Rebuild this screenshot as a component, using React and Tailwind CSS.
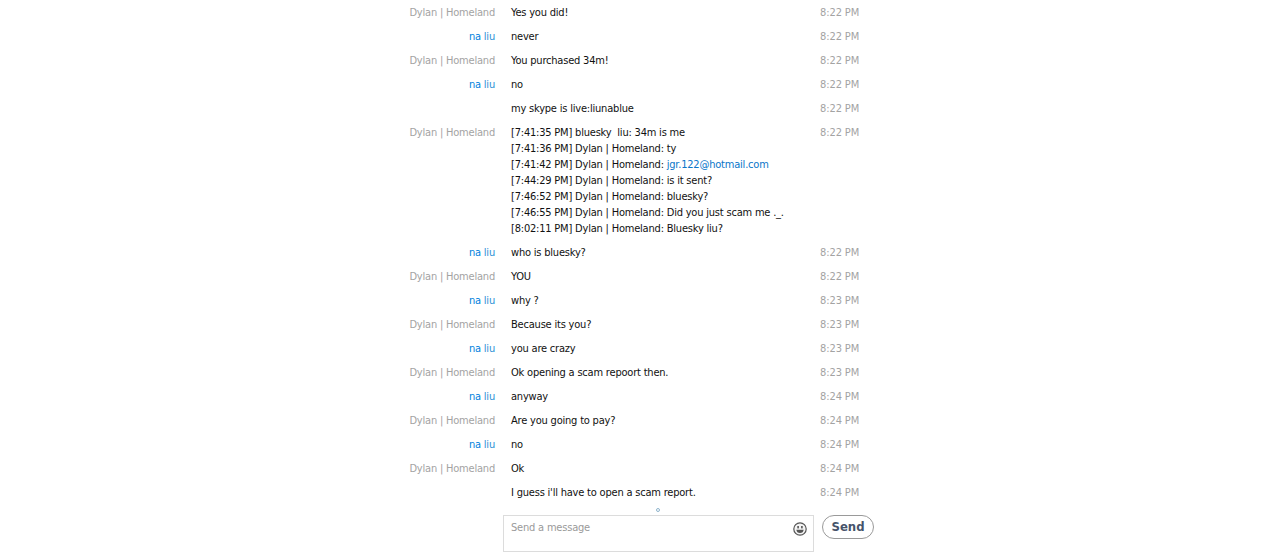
import { Fragment } from "react";

const DYLAN = "Dylan | Homeland";

const rows = [
  { who: DYLAN, text: "Yes you did!", time: "8:22 PM" },
  { who: "na liu", text: "never", time: "8:22 PM" },
  { who: DYLAN, text: "You purchased 34m!", time: "8:22 PM" },
  { who: "na liu", text: "no", time: "8:22 PM" },
  { who: "", text: "my skype is live:liunablue", time: "8:22 PM" },
  {
    who: DYLAN,
    lines: [
      "[7:41:35 PM] bluesky\u00a0 liu: 34m is me",
      "[7:41:36 PM] Dylan | Homeland: ty",
      <Fragment key="mail">
        [7:41:42 PM] Dylan | Homeland: <span className="text-[#0a76c9]">jgr.122@hotmail.com</span>
      </Fragment>,
      "[7:44:29 PM] Dylan | Homeland: is it sent?",
      "[7:46:52 PM] Dylan | Homeland: bluesky?",
      "[7:46:55 PM] Dylan | Homeland: Did you just scam me ._.",
      "[8:02:11 PM] Dylan | Homeland: Bluesky liu?",
    ],
    time: "8:22 PM",
  },
  { who: "na liu", text: "who is bluesky?", time: "8:22 PM" },
  { who: DYLAN, text: "YOU", time: "8:22 PM" },
  { who: "na liu", text: "why ?", time: "8:23 PM" },
  { who: DYLAN, text: "Because its you?", time: "8:23 PM" },
  { who: "na liu", text: "you are crazy", time: "8:23 PM" },
  { who: DYLAN, text: "Ok opening a scam repoort then.", time: "8:23 PM" },
  { who: "na liu", text: "anyway", time: "8:24 PM" },
  { who: DYLAN, text: "Are you going to pay?", time: "8:24 PM" },
  { who: "na liu", text: "no", time: "8:24 PM" },
  { who: DYLAN, text: "Ok", time: "8:24 PM" },
  { who: "", text: "I guess i'll have to open a scam report.", time: "8:24 PM" },
];

function Who({ name }) {
  if (name === "na liu") {
    return (
      <span>
        <span className="text-[#007fdd]">na</span> <span className="text-[#2b8fd6]">liu</span>
      </span>
    );
  }
  return <span className="text-[#a3a3a3]">{name}</span>;
}

function Smiley() {
  return (
    <svg viewBox="0 0 14 14" className="h-[14px] w-[14px]">
      <circle cx="7" cy="7" r="6.2" fill="#f4f4f4" stroke="#555" strokeWidth="1.2" />
      <rect x="4.3" y="4" width="1.6" height="2.4" fill="#555" />
      <rect x="8.1" y="4" width="1.6" height="2.4" fill="#555" />
      <path d="M3.4 7.8h7.2c0 2-1.5 3.3-3.6 3.3S3.4 9.8 3.4 7.8z" fill="#555" />
    </svg>
  );
}

export default function App() {
  return (
    <div className="h-[560px] overflow-hidden bg-white font-['DejaVu_Sans_Condensed','DejaVu_Sans',sans-serif] text-[11px] leading-4 tracking-[-0.2px] whitespace-nowrap text-[#111]">
      <div className="ml-[400px] w-[480px]">
        {rows.map((r, i) => (
          <div key={i} className="flex pt-[5px] pb-[3px]">
            <div className="w-[95px] text-right">
              <Who name={r.who} />
            </div>
            <div className="ml-4 w-[309px]">
              {r.lines ? r.lines.map((l, j) => <div key={j}>{l}</div>) : r.text}
            </div>
            <div className="tracking-[-0.1px] text-[#a3a3a3]">{r.time}</div>
          </div>
        ))}

        <div className="mt-1 ml-[256px] h-[4px] w-[4px] rounded-full border border-[#8fb4cc]" />

        <div className="mt-[3px] ml-[103px] flex items-start">
          <div className="flex h-[37px] w-[311px] justify-between border border-[#dcdcdc] pt-1 pr-[6px] pl-[7px] text-[#9a9a9a]">
            <span>Send a message</span>
            <div className="mt-[2px]">
              <Smiley />
            </div>
          </div>
          <button className="ml-2 h-[24px] w-[52px] rounded-full border border-[#9a9a9a] text-[13px] font-bold tracking-normal text-[#46536a]">
            Send
          </button>
        </div>
      </div>
    </div>
  );
}
